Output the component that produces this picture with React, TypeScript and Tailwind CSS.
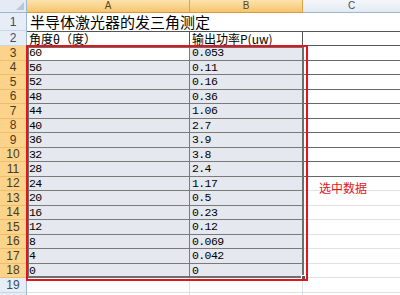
import React from 'react';

const rows: [string, string][] = [
  ['60', '0.053'],
  ['56', '0.11'],
  ['52', '0.16'],
  ['48', '0.36'],
  ['44', '1.06'],
  ['40', '2.7'],
  ['36', '3.9'],
  ['32', '3.8'],
  ['28', '2.4'],
  ['24', '1.17'],
  ['20', '0.5'],
  ['16', '0.23'],
  ['12', '0.12'],
  ['8', '0.069'],
  ['4', '0.042'],
  ['0', '0'],
];

const cellFont = { fontFamily: '"Liberation Mono", "Noto Sans CJK SC", monospace' };
const cjkFont = { fontFamily: '"Noto Sans CJK SC", "Liberation Sans", sans-serif' };

const RowHead = ({ n, selected, h }: { n?: number; selected?: boolean; h: string }) => (
  <div
    className={`w-[27px] shrink-0 ${h} flex items-center justify-center text-[12px] leading-none border-r border-b ${
      selected
        ? 'bg-[#fbd38a] border-r-[#e0a447] border-b-[#f0be6a] text-[#4a3a20]'
        : 'bg-[#e6edf7] border-r-[#9eb6ce] border-b-[#c9d6e6] text-[#3c4d63]'
    }`}
    style={{ fontFamily: '"Liberation Sans", sans-serif' }}
  >
    {n}
  </div>
);

const App = () => {
  return (
    <div className="relative w-[400px] h-[295px] overflow-hidden bg-white" style={cellFont}>
      {/* column headers */}
      <div className="flex h-[13px]">
        <div className="relative w-[27px] shrink-0 bg-[#e4ebf5] border-r border-b border-[#9eb6ce]">
          <div className="absolute right-[2px] bottom-[2px] w-0 h-0 border-l-[8px] border-l-transparent border-b-[8px] border-b-[#b9c7d8]" />
        </div>
        <div className="w-[163px] shrink-0 bg-gradient-to-b from-[#fde3ae] to-[#f6c46c] border-r border-b border-r-[#e0a447] border-b-[#d79a3e] flex items-center justify-center text-[10px] leading-none text-[#5a4520]" style={{ fontFamily: '"Liberation Sans", sans-serif' }}>
          A
        </div>
        <div className="w-[113px] shrink-0 bg-gradient-to-b from-[#fde3ae] to-[#f6c46c] border-r border-b border-r-[#e0a447] border-b-[#d79a3e] flex items-center justify-center text-[10px] leading-none text-[#5a4520]" style={{ fontFamily: '"Liberation Sans", sans-serif' }}>
          B
        </div>
        <div className="flex-1 bg-gradient-to-b from-[#f4f7fb] to-[#e3eaf3] border-b border-[#9eb6ce] flex items-center justify-center text-[10px] leading-none text-[#3c4d63]" style={{ fontFamily: '"Liberation Sans", sans-serif' }}>
          C
        </div>
      </div>

      {/* row 1 title */}
      <div className="flex h-[18px]">
        <RowHead n={1} h="h-[18px]" />
        <div className="flex-1 flex items-center pl-[3px] text-[15px] leading-[18px] text-black whitespace-nowrap" style={cjkFont}>
          半导体激光器的发三角测定
        </div>
      </div>

      {/* row 2 headers */}
      <div className="flex h-[15px]">
        <RowHead n={2} h="h-[15px]" />
        <div className="w-[163px] shrink-0 border-t border-r border-b border-[#555] flex items-center pl-[2px] text-[12px] leading-none text-black whitespace-nowrap" style={cjkFont}>
          角度θ（度）
        </div>
        <div className="w-[113px] shrink-0 border-t border-r border-b border-[#555] flex items-center pl-[2px] text-[12px] leading-none text-black whitespace-nowrap" style={cjkFont}>
          输出功率P(uw)
        </div>
        <div className="flex-1 border-t border-b border-[#555]" />
      </div>

      {/* data rows */}
      {rows.map(([a, b], i) => (
        <div key={`r${i}`} className="flex h-[14.5px]">
          <RowHead n={i + 3} selected h="h-[14.5px]" />
          <div
            className={`w-[163px] shrink-0 border-r border-b border-[#7a7a7a] flex items-center pl-[2px] text-[11.5px] leading-none tracking-[-0.6px] text-black ${
              i === 0 ? 'bg-white' : 'bg-[#e6e8f0]'
            }`}
          >
            {a}
          </div>
          <div className="w-[113px] shrink-0 border-r border-b border-[#7a7a7a] bg-[#e6e8f0] flex items-center pl-[2px] text-[11.5px] leading-none tracking-[-0.6px] text-black">
            {b}
          </div>
          <div className={`flex-1 border-b ${i < 9 ? 'border-[#666]' : 'border-[#dde2ea]'}`} />
        </div>
      ))}

      {/* row 19 */}
      <div className="flex h-[15px]">
        <RowHead n={19} h="h-[15px]" />
        <div className="w-[163px] shrink-0 border-r border-b border-[#dde2ea]" />
        <div className="w-[113px] shrink-0 border-r border-b border-[#dde2ea]" />
        <div className="flex-1 border-b border-[#dde2ea]" />
      </div>
      <div className="flex h-[15px]">
        <RowHead h="h-[15px]" />
        <div className="w-[163px] shrink-0 border-r border-[#dde2ea]" />
        <div className="w-[113px] shrink-0 border-r border-[#dde2ea]" />
        <div className="flex-1" />
      </div>

      {/* selection outline */}
      <div className="absolute left-[27px] top-[46px] w-[277px] h-[232px] border-2 border-[#6e6e6e] pointer-events-none">
        <div className="absolute -right-[4px] -bottom-[4px] w-[5px] h-[5px] bg-[#555] border border-white" />
      </div>
      {/* red annotation box */}
      <div className="absolute left-[26px] top-[45px] w-[282px] h-[236px] border-[2.5px] border-[#e3141c] pointer-events-none" />
      <div className="absolute left-[319px] top-[182px] text-[12px] leading-none text-[#e3141c] whitespace-nowrap" style={cjkFont}>
        选中数据
      </div>
    </div>
  );
};

export default App;
